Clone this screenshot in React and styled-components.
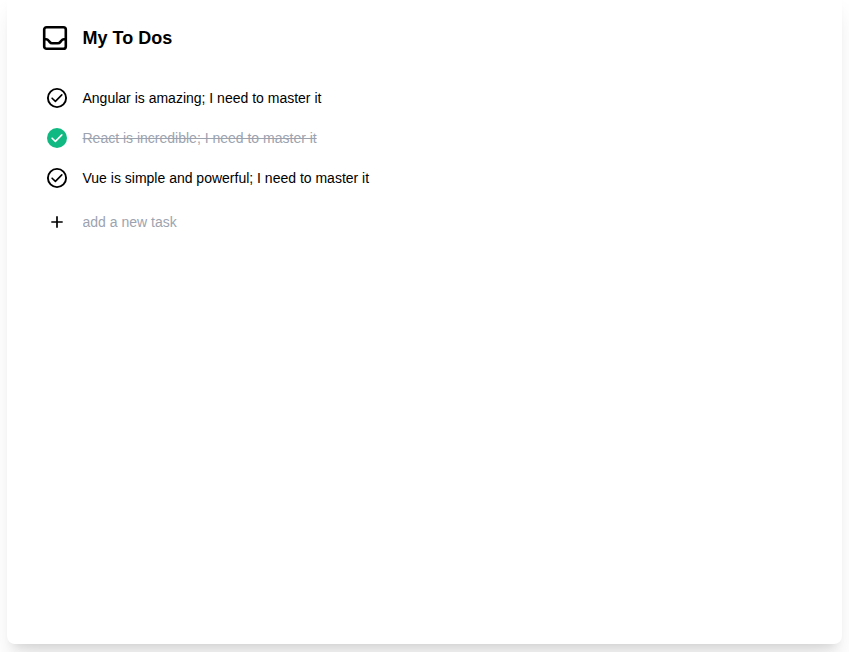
import React, { useState } from "react";
import styled, { createGlobalStyle } from "styled-components";

const GlobalStyle = createGlobalStyle`
  *, *::before, *::after { box-sizing: border-box; }
  body {
    margin: 0;
    overflow: hidden;
    background: #fff;
    color: #000;
    font-family: "Liberation Sans", Arial, sans-serif;
  }
`;

const Page = styled.div`
  display: flex;
  flex-direction: column;
  justify-content: flex-end;
  height: 652px;
  padding: 0 7px 8px;
  overflow: hidden;
`;

const Card = styled.main`
  flex: none;
  height: 654px;
  padding: 30px 32px 20px;
  border-radius: 8px;
  background: #fff;
  box-shadow: 0 20px 25px -5px rgba(0, 0, 0, 0.1), 0 8px 10px -6px rgba(0, 0, 0, 0.1);
`;

const Header = styled.header`
  display: flex;
  align-items: center;
  height: 36px;
  margin-bottom: 22px;
`;

const HeaderIcon = styled.svg`
  width: 32px;
  height: 32px;
  margin-right: 11.5px;
`;

const Title = styled.h1`
  margin: 0;
  font-size: 18px;
  line-height: 28px;
  font-weight: 700;
`;

const List = styled.ul`
  margin: 0;
  padding: 0;
  list-style: none;
`;

const Task = styled.li`
  display: flex;
  align-items: center;
  height: 40px;
  padding-left: 6px;
  cursor: pointer;
`;

const AddRow = styled(Task)`
  margin-top: 4px;
`;

const RowIcon = styled.svg`
  flex: none;
  width: 24px;
  height: 24px;
  margin-right: 13.5px;
`;

const TaskText = styled.span`
  font-size: 14px;
  line-height: 20px;
  color: ${({ $done }) => ($done ? "#9ca3af" : "#000")};
  text-decoration: ${({ $done }) => ($done ? "line-through" : "none")};
`;

const NewTask = styled.input`
  width: 300px;
  padding: 0;
  border: 0;
  outline: 0;
  background: transparent;
  font: 14px/20px "Liberation Sans", Arial, sans-serif;
  &::placeholder { color: #9ca3af; opacity: 1; }
`;

function CheckIcon({ done }) {
  return (
    <RowIcon viewBox="0 0 24 24" fill="none">
      {done ? (
        <circle cx="12" cy="12" r="10" fill="#10b981" />
      ) : (
        <circle cx="12" cy="12" r="9.1" stroke="#000" strokeWidth="1.9" />
      )}
      <path
        d="M7.1 12.2l3.3 3.2 6.4-6.5"
        stroke={done ? "#fff" : "#000"}
        strokeWidth="1.6"
        strokeLinecap="round"
        strokeLinejoin="round"
      />
    </RowIcon>
  );
}

const initialTasks = [
  { text: "Angular is amazing; I need to master it", done: false },
  { text: "React is incredible; I need to master it", done: true },
  { text: "Vue is simple and powerful; I need to master it", done: false },
];

export default function App() {
  const [tasks, setTasks] = useState(initialTasks);
  const toggle = (index) =>
    setTasks(tasks.map((t, i) => (i === index ? { ...t, done: !t.done } : t)));
  const add = (e) => {
    if (e.key === "Enter" && e.target.value.trim()) {
      setTasks([...tasks, { text: e.target.value, done: false }]);
      e.target.value = "";
    }
  };

  return (
    <Page>
      <GlobalStyle />
      <Card>
        <Header>
          <HeaderIcon viewBox="0 0 32 32" fill="none" stroke="#000" strokeWidth="2.6">
            <rect x="5.2" y="5.2" width="21.6" height="21.6" rx="2.4" />
            <path d="M5 17.2h2.2c1 0 1.7.5 2.3 1.3l1.1 1.4c.7.9 1.4 1.4 2.5 1.4h5.8c1.1 0 1.8-.5 2.5-1.4l1.1-1.4c.6-.8 1.3-1.3 2.3-1.3H27" />
          </HeaderIcon>
          <Title>My To Dos</Title>
        </Header>
        <List>
          {tasks.map((task, i) => (
            <Task key={i} onClick={() => toggle(i)}>
              <CheckIcon done={task.done} />
              <TaskText $done={task.done}>{task.text}</TaskText>
            </Task>
          ))}
          <AddRow>
            <RowIcon viewBox="0 0 24 24" stroke="#000" strokeWidth="1.7">
              <path d="M6.3 12h11.4M12 6.3v11.4" />
            </RowIcon>
            <NewTask placeholder="add a new task" onKeyDown={add} />
          </AddRow>
        </List>
      </Card>
    </Page>
  );
}
